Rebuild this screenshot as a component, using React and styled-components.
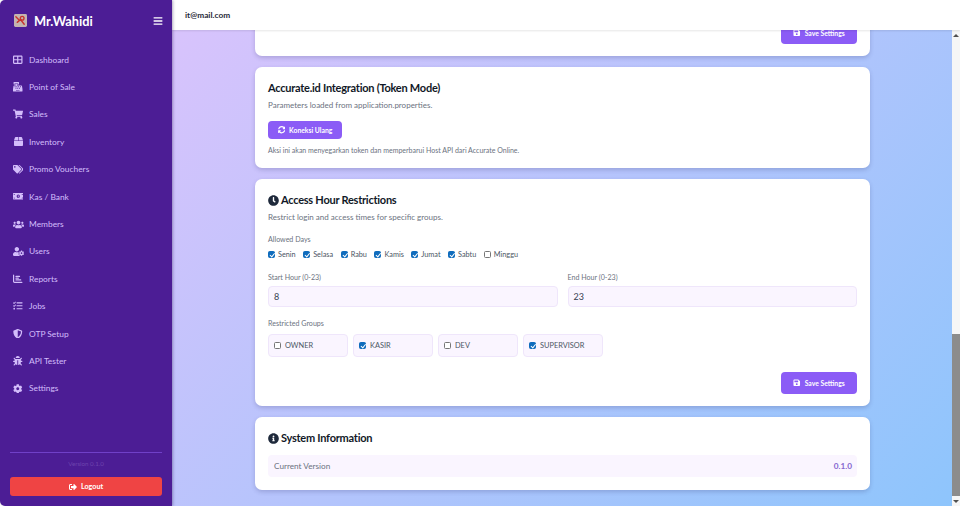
import React from "react";
import styled, { createGlobalStyle } from "styled-components";
import {
  FaBars,
  FaBox,
  FaBug,
  FaCashRegister,
  FaClock,
  FaCog,
  FaInfoCircle,
  FaMoneyBillAlt,
  FaSave,
  FaShieldAlt,
  FaShoppingCart,
  FaSignOutAlt,
  FaSyncAlt,
  FaTags,
  FaTasks,
  FaUserCog,
  FaUsers,
} from "react-icons/fa";
import { FaChartBar, FaTableCellsLarge } from "react-icons/fa6";

const GlobalStyle = createGlobalStyle`
  html, body {
    margin: 0;
    height: 100%;
    overflow: hidden;
    background: #fff;
    font-family: Lato, "Noto Sans", sans-serif;
  }
  * { box-sizing: border-box; }
`;

const Page = styled.div`
  display: flex;
  width: 960px;
  height: 506px;
  overflow: hidden;
`;

// sidebar
const Sidebar = styled.aside`
  display: flex;
  flex-direction: column;
  flex: 0 0 172px;
  height: 506px;
  padding: 0 10px 10px;
  background: #4c1d95;
  border-radius: 5px 0 0 5px;
  box-shadow: 1px 0 3px rgba(30, 10, 70, 0.35);
  z-index: 2;
`;

const Brand = styled.div`
  display: flex;
  align-items: center;
  height: 41px;
  margin-bottom: 5px;
  padding: 0 0 0 4px;
`;

const BrandName = styled.span`
  flex: 1;
  margin-left: 7px;
  color: #fff;
  font-size: 12.8px;
  font-weight: 700;
`;

const Burger = styled(FaBars)`
  width: 10px;
  height: 10px;
  margin-right: -1px;
  color: #fff;
`;

const Nav = styled.nav`
  display: flex;
  flex-direction: column;
  flex: 1;
`;

const NavItem = styled.div`
  display: flex;
  align-items: center;
  gap: 6px;
  height: 27.4px;
  padding-left: 3px;
  color: #d3bdfb;
  font-size: 8.4px;
`;

const IconSlot = styled.span`
  display: flex;
  justify-content: center;
  width: 10px;

  svg {
    flex: none;
    width: ${(p) => p.$size || 9.5}px;
    height: ${(p) => p.$size || 9.5}px;
  }
`;

const Divider = styled.div`
  height: 1px;
  background: #7040c8;
`;

const VersionNote = styled.div`
  height: 8px;
  margin: 7px 0 9px;
  color: #6d44ad;
  font-size: 6.2px;
  line-height: 8px;
  text-align: center;
`;

const LogoutButton = styled.button`
  display: flex;
  align-items: center;
  justify-content: center;
  gap: 4px;
  height: 19px;
  border: 0;
  border-radius: 3px;
  background: #ef4444;
  color: #fff;
  font-family: inherit;
  font-size: 7.2px;
  font-weight: 700;

  svg {
    width: 8px;
    height: 8px;
  }
`;

// right side
const Workspace = styled.div`
  display: flex;
  flex-direction: column;
  flex: 1;
  min-width: 0;
`;

const TopBar = styled.header`
  display: flex;
  align-items: center;
  flex: 0 0 30px;
  padding-left: 13px;
  background: #fff;
  color: #1f2937;
  font-size: 8.3px;
  font-weight: 700;
  box-shadow: 0 1px 2px rgba(0, 0, 0, 0.1);
  z-index: 1;
`;

const ScrollArea = styled.div`
  display: flex;
  flex: 1;
  min-height: 0;
`;

const Content = styled.main`
  display: flex;
  flex-direction: column;
  justify-content: flex-end;
  flex: 1;
  min-width: 0;
  gap: 11px;
  overflow: hidden;
  padding: 0 82px 16px 83px;
  background: linear-gradient(135deg, #d8c3fc 0%, #8ec5fc 100%);
`;

const Card = styled.section`
  flex: none;
  padding: 14px 13px 12px;
  background: #fff;
  border-radius: 7px;
  box-shadow: 0 2px 4px rgba(50, 50, 110, 0.22);
`;

const ClippedCard = styled(Card)`
  display: flex;
  align-items: flex-end;
  justify-content: flex-end;
  height: 40px;
  padding: 0 13px 12px;
`;

const CardTitle = styled.h2`
  display: flex;
  align-items: center;
  gap: 2px;
  margin: 0;
  color: #111827;
  font-size: 11px;
  line-height: 14px;
  font-weight: 700;
  letter-spacing: -0.25px;

  svg {
    width: 11px;
    height: 11px;
    color: #1e293b;
  }
`;

const CardNote = styled.p`
  margin: 5px 0 0;
  color: #6b7280;
  font-size: 8px;
  line-height: 11px;
`;

const PrimaryButton = styled.button`
  display: inline-flex;
  align-items: center;
  justify-content: center;
  gap: 4px;
  width: ${(p) => p.$width}px;
  height: ${(p) => p.$height}px;
  padding: 0;
  border: 0;
  border-radius: 4px;
  background: #8b5cf6;
  color: #fff;
  font-family: inherit;
  font-size: 6.8px;
  font-weight: 700;

  svg {
    width: 7.5px;
    height: 7.5px;
  }
`;

const ActionRow = styled.div`
  display: flex;
  margin-top: 10px;
`;

const FinePrint = styled.p`
  margin: 6px 0 1px;
  color: #6b7280;
  font-size: 7px;
  line-height: 10px;
`;

const FieldLabel = styled.div`
  margin-top: ${(p) => p.$top || 0}px;
  color: #6b7280;
  font-size: 7.1px;
  line-height: 10px;
`;

const DayRow = styled.div`
  display: flex;
  align-items: center;
  height: 10px;
  margin-top: 4px;
`;

const CheckLabel = styled.label`
  display: flex;
  align-items: center;
  gap: 3px;
  margin-right: 7.5px;
  color: #4b5563;
  font-size: 7.3px;
`;

const CheckBox = styled.input.attrs({ type: "checkbox", readOnly: true })`
  position: relative;
  flex: none;
  width: 7px;
  height: 7px;
  margin: 0;
  appearance: none;
  background: #fff;
  border: 0.75px solid #767676;
  border-radius: 1.5px;

  &:checked {
    background: #0f6cbd;
    border-color: #0f6cbd;
  }

  &:checked::after {
    content: "";
    position: absolute;
    left: 1.9px;
    top: 0.4px;
    width: 1.7px;
    height: 3.6px;
    border: solid #fff;
    border-width: 0 1px 1px 0;
    transform: rotate(40deg);
  }
`;

const HourGrid = styled.div`
  display: grid;
  grid-template-columns: 1fr 1fr;
  gap: 10px;
  margin-top: 14px;
`;

const HourInput = styled.div`
  display: flex;
  align-items: center;
  height: 21px;
  margin-top: 3px;
  padding-left: 5px;
  background: #faf5ff;
  border: 1px solid #efe6fb;
  border-radius: 4px;
  color: #374151;
  font-size: 9px;
`;

const GroupRow = styled.div`
  display: flex;
  gap: 5px;
  margin-top: 5px;
`;

const GroupChip = styled.label`
  display: flex;
  align-items: center;
  gap: 4px;
  width: 80px;
  height: 23px;
  padding-left: 5px;
  background: #faf5ff;
  border: 1px solid #efe6fb;
  border-radius: 4px;
  color: #4b5563;
  font-size: 7.4px;
`;

const SaveRow = styled.div`
  display: flex;
  justify-content: flex-end;
  margin-top: 15px;
`;

const InfoRow = styled.div`
  display: flex;
  align-items: center;
  justify-content: space-between;
  height: 22px;
  margin: 10px 0 1px;
  padding: 0 5px 0 6px;
  background: #faf5ff;
  border-radius: 4px;
  color: #6b7280;
  font-size: 8.2px;
`;

const InfoValue = styled.span`
  color: #8466cf;
  font-weight: 700;
`;

// page scrollbar
const ScrollTrack = styled.div`
  display: flex;
  flex-direction: column;
  align-items: center;
  flex: 0 0 8px;
  background: #f6f6f6;
`;

const ScrollArrow = styled.div`
  display: flex;
  align-items: center;
  justify-content: center;
  flex: 0 0 10px;
  color: #505050;

  &::before {
    content: "";
    border-left: 3px solid transparent;
    border-right: 3px solid transparent;
    ${(p) => (p.$down ? "border-top" : "border-bottom")}: 3px solid currentColor;
  }
`;

const ScrollSpace = styled.div`
  display: flex;
  flex-direction: column;
  justify-content: flex-end;
  flex: 1;
  width: 100%;
`;

const ScrollThumb = styled.div`
  height: 162px;
  background: #8c8c8c;
`;

// little picture next to the brand name
const BrandLogo = () => (
  <svg width="13" height="13" viewBox="0 0 14 14" aria-hidden="true">
    <rect width="14" height="14" rx="1.5" fill="#c4b4b0" />
    <g fill="none" stroke="#c8322c" strokeWidth="1.5" strokeLinecap="round">
      <path d="M2 3l4 4M3.5 9L7 6l4 5" />
      <circle cx="8.8" cy="4.6" r="2" />
    </g>
  </svg>
);

const menu = [
  ["Dashboard", FaTableCellsLarge],
  ["Point of Sale", FaCashRegister],
  ["Sales", FaShoppingCart, 10],
  ["Inventory", FaBox, 9],
  ["Promo Vouchers", FaTags, 10.5],
  ["Kas / Bank", FaMoneyBillAlt, 10.5],
  ["Members", FaUsers, 11],
  ["Users", FaUserCog, 11],
  ["Reports", FaChartBar],
  ["Jobs", FaTasks],
  ["OTP Setup", FaShieldAlt],
  ["API Tester", FaBug],
  ["Settings", FaCog],
];

const days = [
  ["Senin", true],
  ["Selasa", true],
  ["Rabu", true],
  ["Kamis", true],
  ["Jumat", true],
  ["Sabtu", true],
  ["Minggu", false],
];

const groups = [
  ["OWNER", false],
  ["KASIR", true],
  ["DEV", false],
  ["SUPERVISOR", true],
];

const SaveButton = () => (
  <PrimaryButton $width={76} $height={22}>
    <FaSave /> Save Settings
  </PrimaryButton>
);

export default function App() {
  return (
    <Page>
      <GlobalStyle />
      <Sidebar>
        <Brand>
          <BrandLogo />
          <BrandName>Mr.Wahidi</BrandName>
          <Burger />
        </Brand>
        <Nav>
          {menu.map(([label, Icon, size]) => (
            <NavItem key={label}>
              <IconSlot $size={size}>
                <Icon />
              </IconSlot>
              {label}
            </NavItem>
          ))}
        </Nav>
        <Divider />
        <VersionNote>Version 0.1.0</VersionNote>
        <LogoutButton>
          <FaSignOutAlt /> Logout
        </LogoutButton>
      </Sidebar>

      <Workspace>
        <TopBar>it@mail.com</TopBar>
        <ScrollArea>
          <Content>
            <ClippedCard>
              <SaveButton />
            </ClippedCard>

            <Card>
              <CardTitle>Accurate.id Integration (Token Mode)</CardTitle>
              <CardNote>Parameters loaded from application.properties.</CardNote>
              <ActionRow>
                <PrimaryButton $width={74} $height={18}>
                  <FaSyncAlt /> Koneksi Ulang
                </PrimaryButton>
              </ActionRow>
              <FinePrint>
                Aksi ini akan menyegarkan token dan memperbarui Host API dari
                Accurate Online.
              </FinePrint>
            </Card>

            <Card>
              <CardTitle>
                <FaClock /> Access Hour Restrictions
              </CardTitle>
              <CardNote>
                Restrict login and access times for specific groups.
              </CardNote>
              <FieldLabel $top={12}>Allowed Days</FieldLabel>
              <DayRow>
                {days.map(([day, on]) => (
                  <CheckLabel key={day}>
                    <CheckBox defaultChecked={on} />
                    {day}
                  </CheckLabel>
                ))}
              </DayRow>
              <HourGrid>
                <div>
                  <FieldLabel>Start Hour (0-23)</FieldLabel>
                  <HourInput>8</HourInput>
                </div>
                <div>
                  <FieldLabel>End Hour (0-23)</FieldLabel>
                  <HourInput>23</HourInput>
                </div>
              </HourGrid>
              <FieldLabel $top={12}>Restricted Groups</FieldLabel>
              <GroupRow>
                {groups.map(([name, on]) => (
                  <GroupChip key={name}>
                    <CheckBox defaultChecked={on} />
                    {name}
                  </GroupChip>
                ))}
              </GroupRow>
              <SaveRow>
                <SaveButton />
              </SaveRow>
            </Card>

            <Card>
              <CardTitle>
                <FaInfoCircle /> System Information
              </CardTitle>
              <InfoRow>
                <span>Current Version</span>
                <InfoValue>0.1.0</InfoValue>
              </InfoRow>
            </Card>
          </Content>

          <ScrollTrack>
            <ScrollArrow />
            <ScrollSpace>
              <ScrollThumb />
            </ScrollSpace>
            <ScrollArrow $down />
          </ScrollTrack>
        </ScrollArea>
      </Workspace>
    </Page>
  );
}
